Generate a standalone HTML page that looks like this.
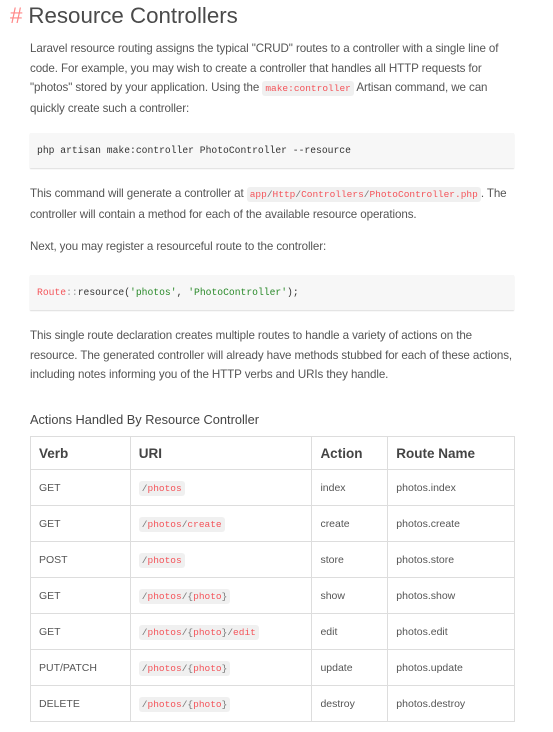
<!DOCTYPE html>
<html><head><meta charset="utf-8"><style>
*{margin:0;padding:0;box-sizing:border-box}
body{width:553px;height:732px;background:#fff;font-family:"Liberation Sans",sans-serif;color:#525252;position:relative;overflow:hidden}
.a{position:absolute;white-space:nowrap}
h1{position:absolute;left:10px;top:1px;font-size:22.3px;font-weight:normal;color:#4a4a4a;line-height:30px}
h1 span{color:#f88;margin-right:6px}
p{position:absolute;left:30px;font-size:11.6px;line-height:19.5px;letter-spacing:-0.1px;color:#555;white-space:nowrap}
code{font-family:"Liberation Mono",monospace;font-size:9.5px;background:#f0f0f0;color:#f4545a;padding:2px 3px;border-radius:3px;letter-spacing:0}
code .s{color:#777}
.pre{position:absolute;left:30px;width:484px;height:35px;background:#f7f7f7;box-shadow:0 1px 1px #ddd;font-family:"Liberation Mono",monospace;font-size:9.7px;line-height:35px;padding-left:7px;color:#333}
table{position:absolute;left:30px;top:436px;width:485px;border-collapse:collapse;font-size:10.5px}
td,th{border:1px solid #ddd;text-align:left;padding:0 8px;height:36px;color:#555}
th{font-weight:bold;font-size:13.5px;height:33px;color:#444}
</style></head><body>
<h1><span>#</span>Resource Controllers</h1>
<p style="top:39px">Laravel resource routing assigns the typical "CRUD" routes to a controller with a single line of<br>code. For example, you may wish to create a controller that handles all HTTP requests for<br>"photos" stored by your application. Using the <code>make:controller</code> Artisan command, we can<br>quickly create such a controller:</p>
<div class="pre" style="top:133px">php artisan make:controller PhotoController --resource</div>
<p style="top:184px">This command will generate a controller at <code>app<span class="s">/</span>Http<span class="s">/</span>Controllers<span class="s">/</span>PhotoController.php</code>. The<br>controller will contain a method for each of the available resource operations.</p>
<p style="top:237px">Next, you may register a resourceful route to the controller:</p>
<div class="pre" style="top:275px"><span style="color:#f4545a">Route</span><span style="color:#999">::</span>resource(<span style="color:#2a8a2a">'photos'</span>, <span style="color:#2a8a2a">'PhotoController'</span>);</div>
<p style="top:326px">This single route declaration creates multiple routes to handle a variety of actions on the<br>resource. The generated controller will already have methods stubbed for each of these actions,<br>including notes informing you of the HTTP verbs and URIs they handle.</p>
<div class="a" style="left:30px;top:412px;font-size:12.8px;color:#444">Actions Handled By Resource Controller</div>
<table>
<colgroup><col style="width:100px"><col style="width:182px"><col style="width:76px"><col style="width:127px"></colgroup>
<tr><th>Verb</th><th>URI</th><th>Action</th><th>Route Name</th></tr>
<tr><td>GET</td><td><code><span class="s">/</span>photos</code></td><td>index</td><td>photos.index</td></tr>
<tr><td>GET</td><td><code><span class="s">/</span>photos<span class="s">/</span>create</code></td><td>create</td><td>photos.create</td></tr>
<tr><td>POST</td><td><code><span class="s">/</span>photos</code></td><td>store</td><td>photos.store</td></tr>
<tr><td>GET</td><td><code><span class="s">/</span>photos<span class="s">/{</span>photo<span class="s">}</span></code></td><td>show</td><td>photos.show</td></tr>
<tr><td>GET</td><td><code><span class="s">/</span>photos<span class="s">/{</span>photo<span class="s">}/</span>edit</code></td><td>edit</td><td>photos.edit</td></tr>
<tr><td>PUT/PATCH</td><td><code><span class="s">/</span>photos<span class="s">/{</span>photo<span class="s">}</span></code></td><td>update</td><td>photos.update</td></tr>
<tr><td>DELETE</td><td><code><span class="s">/</span>photos<span class="s">/{</span>photo<span class="s">}</span></code></td><td>destroy</td><td>photos.destroy</td></tr>
</table>
</body></html>
